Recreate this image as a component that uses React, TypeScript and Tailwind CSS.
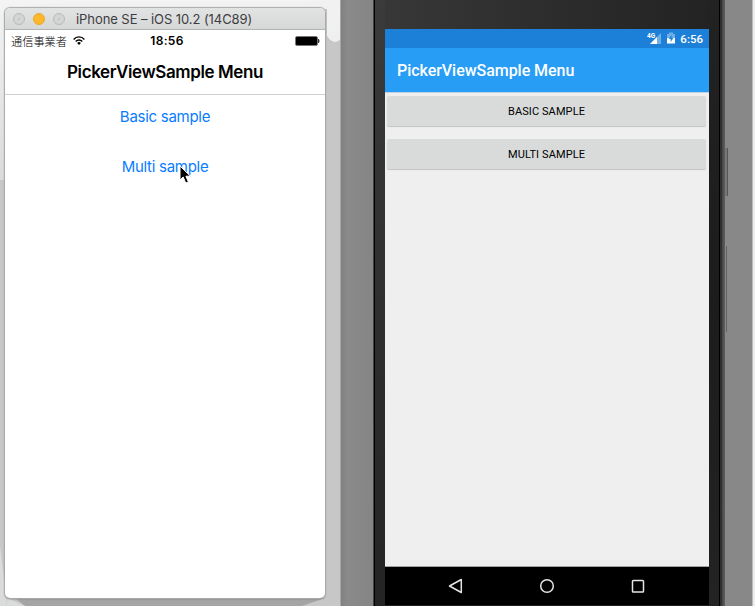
import React from "react";

function TitleBar() {
  return (
    <div className="flex h-[22px] items-center rounded-t-[5px] border-b border-[#b1b3b2] bg-linear-to-b from-[#e2e3e3] to-[#d6d8d7] pl-2">
      <div className="flex gap-2">
        <span className="flex size-3 items-center justify-center rounded-full border border-[#b9bbba] bg-[#d3d5d4]">
          <span className="size-0.5 rounded-full bg-[#bcbebd]" />
        </span>
        <span className="size-3 rounded-full border border-[#eba82c] bg-[#fdb72b]" />
        <span className="flex size-3 items-center justify-center rounded-full border border-[#b9bbba] bg-[#d3d5d4]">
          <span className="size-0.5 rounded-full bg-[#bcbebd]" />
        </span>
      </div>
      <span className="ml-[11px] text-[13px] leading-5 tracking-[-0.07px] whitespace-nowrap text-[#3d3c42]">
        iPhone SE – iOS 10.2 (14C89)
      </span>
    </div>
  );
}

function IosStatusBar() {
  return (
    <div className="grid h-5 grid-cols-3 items-center text-black">
      <div className="flex items-center pl-1.5">
        <span className="font-['Noto_Sans_CJK_JP',sans-serif] text-[11.2px] leading-5 font-light whitespace-nowrap">通信事業者</span>
        <svg className="ml-1.5 h-[9px] w-3" viewBox="0 0 12 9" fill="none" stroke="#000" strokeWidth="1.3">
          <path d="M.6 3.5C3.5.1 8.500.1 11.400 3.500M2.700 5.500C4.500 3.500 7.500 3.500 9.300 5.500" />
          <path d="M6 8.900 4.100 6.900Q6 5.200 7.900 6.900Z" fill="#000" stroke="none" />
        </svg>
      </div>
      <span className="pt-px pl-1 text-center text-[12px] leading-5 font-semibold tracking-[0.35px]">18:56</span>
      <div className="flex justify-end pr-[5px]">
        <svg className="h-[10px] w-[25px]" viewBox="0 0 25 10">
          <rect x=".5" y=".5" width="22" height="9" rx="1.500" fill="#000" stroke="#777" />
          <path d="M23.500 3Q25 5 23.500 7Z" fill="#000" stroke="#000" strokeWidth=".5" />
        </svg>
      </div>
    </div>
  );
}

function IosSimulator() {
  return (
    <div className="relative flex h-[590px] w-[320px] flex-col rounded-[5px] bg-white font-['Inter',sans-serif] shadow-[0_0_1px_1px_#aaaaaa,0_1px_2px_#777777]">
      <TitleBar />
      <IosStatusBar />
      <div className="flex h-[45px] items-center justify-center border-b border-[#d0d0d0] text-[17px] font-semibold tracking-[-0.4px] text-black">
        <span className="pt-0.5">PickerViewSample Menu</span>
      </div>
      <div className="flex flex-col items-center text-[15px] leading-[50px] tracking-[-0.28px] text-[#087cff]">
        <div className="-mt-[3px] h-[50px]">Basic sample</div>
        <div className="h-[50px]">Multi sample</div>
      </div>
      <svg className="absolute top-[157px] left-[173px] h-[20px] w-[14px]" viewBox="0 0 14 20">
        <path d="M2 1v14l3.200-3 2.500 6 2.700-1.100-2.500-5.700H12.500Z" fill="#000" stroke="#fff" strokeWidth="1" />
      </svg>
    </div>
  );
}

function AndroidStatusBar() {
  return (
    <div className="flex h-[19px] items-center justify-end bg-[#1d80d8] pr-[6px] text-white">
      <svg className="mb-px h-[13px] w-[15px]" viewBox="0 0 15 13">
        <path d="M14 1v11H3Z" fill="#70afe6" />
        <path d="M10 5v7H3Z" fill="#fff" />
        <text x="0" y="6" fill="#fff" fontSize="6.500" fontWeight="700" fontFamily="Roboto" stroke="#1d80d8" strokeWidth="1" paintOrder="stroke">4G</text>
      </svg>
      <svg className="mr-px mb-px ml-[5px] h-3 w-2" viewBox="0 0 8 12">
        <path d="M0 2h2V.5h4V2h2v5H0Z" fill="#70afe6" />
        <path d="M0 6h8v5.500H0Z" fill="#fff" />
        <path d="M4.800 2.800 1.700 7h2v3l2.700-4H4.500Z" fill="#1d80d8" />
      </svg>
      <span className="ml-[4px] pt-px text-[11.500px] leading-[18px] font-medium">6:56</span>
    </div>
  );
}

function AndroidButton({ children }: { children: React.ReactNode }) {
  return (
    <div className="flex h-[30px] items-center justify-center rounded-[2px] bg-[#d8dbda] pt-0.5 text-[11px] tracking-[0.1px] text-black shadow-[0_1px_1px_#c4c4c4]">
      {children}
    </div>
  );
}

function NavigationBar() {
  return (
    <div className="flex h-[39px] items-center justify-between border-t border-[#a2a2a2] bg-black pr-[63px] pb-px pl-[62px]">
      <svg className="size-4" viewBox="0 0 16 16" fill="none" stroke="#e5e5e5" strokeWidth="1.500">
        <path d="M14.300 1.500v13L2.500 8Z" strokeLinejoin="round" />
      </svg>
      <svg className="size-4" viewBox="0 0 16 16" fill="none" stroke="#e5e5e5" strokeWidth="1.500">
        <circle cx="8" cy="8" r="6.300" />
      </svg>
      <svg className="size-4" viewBox="0 0 16 16" fill="none" stroke="#e5e5e5" strokeWidth="1.500">
        <rect x="2.500" y="2.500" width="11" height="11.500" rx=".8" />
      </svg>
    </div>
  );
}

function AndroidEmulator() {
  return (
    <div className="relative flex h-full w-[352px] bg-linear-to-r from-[#383839] to-[#222222] font-['Roboto',sans-serif]">
      <div className="flex w-3 shrink-0 bg-linear-to-b from-[#3b3b3c] to-[#242424]">
        <div className="w-px bg-[#444444]" />
        <div className="w-px bg-black" />
      </div>
      <div className="flex w-[324px] shrink-0 flex-col pt-[29px]">
        <AndroidStatusBar />
        <div className="flex h-11 items-center bg-[#279df5] pl-3 text-[16px] font-medium tracking-[-0.04px] text-white">
          <span className="mt-0.5">PickerViewSample Menu</span>
        </div>
        <div className="flex flex-1 flex-col gap-[13px] border-t border-[#bdd3e5] bg-[#efefef] pt-[3px] pr-[3px] pl-[2px]">
          <AndroidButton>BASIC SAMPLE</AndroidButton>
          <AndroidButton>MULTI SAMPLE</AndroidButton>
        </div>
        <NavigationBar />
        <div className="h-px bg-[#202020]" />
      </div>
      <div className="flex flex-1 bg-linear-to-b from-[#222222] via-[#1c1c1c] to-[#232323]">
        <div className="w-[10px]" />
        <div className="w-px bg-black" />
        <div className="w-0.5 bg-[#303030]" />
        <div className="flex-1 bg-linear-to-r from-[#454545] to-[#606060]" />
      </div>
      <div className="absolute top-[148px] -right-[3px] h-12 w-[3px] border-r border-[#565656] bg-[#777777]" />
      <div className="absolute top-[246px] -right-[2px] h-[86px] w-px bg-[#626262]" />
    </div>
  );
}

export default function App() {
  return (
    <div className="flex h-[606px] w-[755px] overflow-hidden bg-[#888888]">
      <div className="relative w-[341px] shrink-0 bg-[#c7c7c7]">
        <svg className="absolute inset-0 h-full w-full" viewBox="0 0 341 606">
          <defs>
            <linearGradient id="wallpaper" x2="0" y2="1">
              <stop stopColor="#f4f4f4" />
              <stop offset="1" stopColor="#d9dcdb" />
            </linearGradient>
          </defs>
          <path d="M0 0H341V39Q334 46 327 36V9H5V180H0Z" fill="url(#wallpaper)" />
          <path d="M0 14Q20 3 80 2H300L327 0H341L336 19Q331 24 327 16V8H5L0 30Z" fill="#f1f1f1" />
          <path d="M25 606 15 598H325L302 606Z" fill="#a5a5a5" />
          <path d="M0 545 7 606H0ZM7 598l18 8H7Z" fill="#dadcdb" />
          <path d="M340.500 0V606" stroke="#a6a6a6" />
        </svg>
        <div className="pt-2 pl-[5px]">
          <IosSimulator />
        </div>
      </div>
      <div className="w-8 shrink-0 bg-linear-to-r from-[#818181] via-[#8a8a8a] via-20% to-[#858585]" />
      <AndroidEmulator />
      <div className="w-[27px]" />
      <div className="w-[3px] border-l border-[#bbbbbb] bg-[#eeeeee]" />
    </div>
  );
}
